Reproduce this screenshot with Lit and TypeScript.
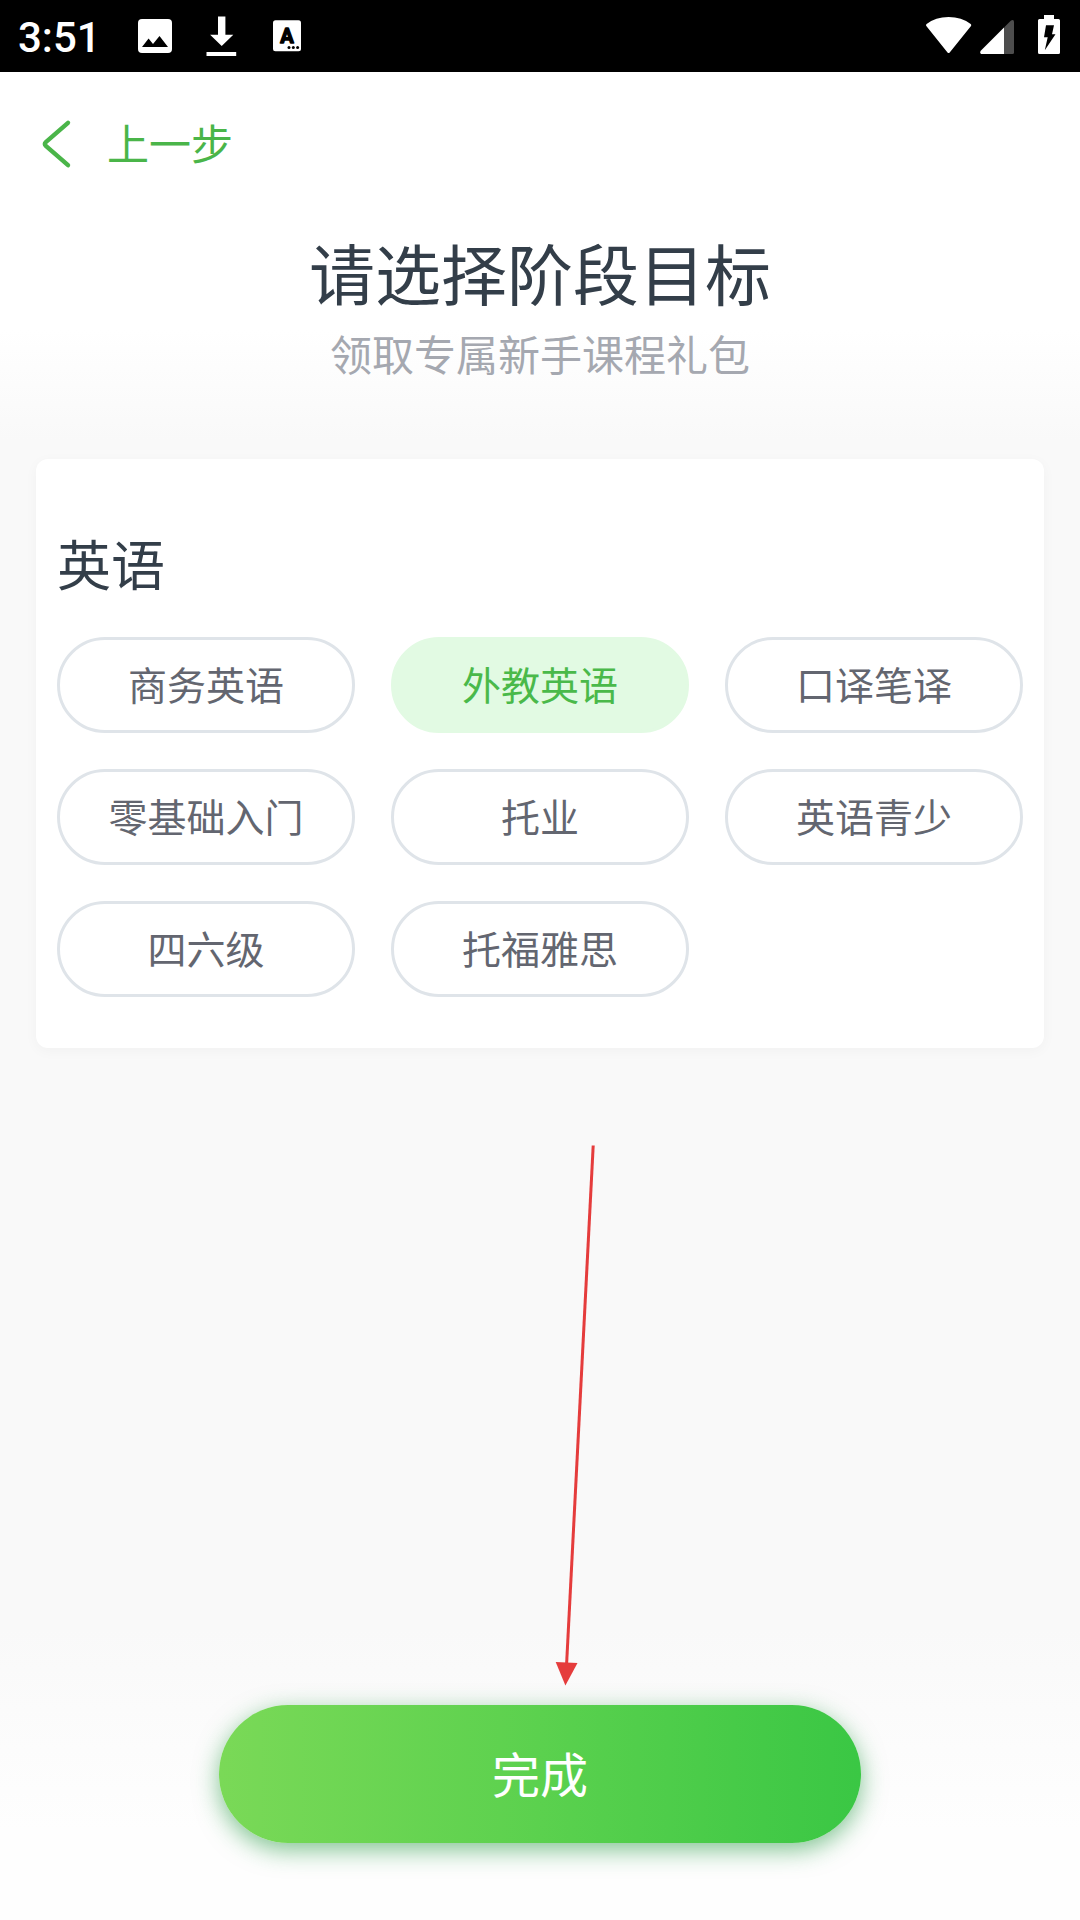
import { LitElement, html, css } from "lit";
import { customElement, property, state } from "lit/decorators.js";
import { classMap } from "lit/directives/class-map.js";

@customElement("status-bar")
class StatusBar extends LitElement {
  static styles = css`
    :host {
      display: flex;
      justify-content: space-between;
      height: 72px;
      box-sizing: border-box;
      padding: 0 20px 0 18px;
      background: #000;
      color: #fff;
    }
    .side {
      display: flex;
      align-items: flex-start;
    }
    .time {
      width: 112px;
      line-height: 76px;
      font-family: Roboto, sans-serif;
      font-weight: 500;
      font-size: 42px;
      white-space: nowrap;
    }
    svg {
      display: block;
    }
    .letter {
      font: 700 20px Roboto, sans-serif;
      stroke: #000;
      stroke-width: 1.4;
      stroke-linejoin: round;
    }
  `;

  render() {
    return html`
      <div class="side">
        <span class="time">3:51</span>
        <svg width="50" height="72" viewBox="130 0 50 72">
          <rect x="138" y="19" width="34" height="34" rx="4" fill="#fff" />
          <path d="M142 47L148.600 38.500L153 44L159.500 36L168 47Z" fill="#000" />
        </svg>
        <svg width="80" height="72" viewBox="180 0 80 72" fill="#fff">
          <path d="M218 16.500H225.400V34.700H233.300L221.700 46L210.100 34.700H218Z" />
          <rect x="206.500" y="52" width="29.700" height="4" />
        </svg>
        <svg width="50" height="72" viewBox="260 0 50 72">
          <rect x="273" y="20.300" width="28" height="31" rx="2.500" fill="#fff" />
          <text class="letter" x="287" y="42.800" text-anchor="middle">A</text>
          <circle cx="289" cy="47.600" r="1.500" />
          <circle cx="293.300" cy="47.600" r="1.500" />
          <circle cx="297.600" cy="47.600" r="1.500" />
        </svg>
      </div>
      <div class="side">
        <svg width="140" height="72" viewBox="920 0 140 72" fill="#fff">
          <path d="M926.300 26Q925.500 24.800 926.600 24Q935.500 17 948.600 17Q961.700 17 970.700 24Q971.800 24.800 971 26L949.700 52.400Q948.600 53.600 947.500 52.400Z" />
          <path d="M1004 27.500V54H981Q979.500 53 980.500 51Z" />
          <path d="M1004 27.500L1011 20.500Q1014 19 1014 22V52.500Q1014 54 1012.500 54H1004Z" fill="#4d4d4d" />
          <path d="M1044 15H1054V19H1058.500Q1060 19 1060 20.500V52.500Q1060 54 1058.500 54H1039.500Q1038 54 1038 52.500V20.500Q1038 19 1039.500 19H1044Z" />
          <path d="M1046 25.300H1054L1052 34.300H1055.500L1044.800 50.300L1047.700 37.300H1044Z" fill="#000" />
        </svg>
      </div>
    `;
  }
}

@customElement("goal-chip")
class GoalChip extends LitElement {
  @property() label = "";
  @property({ type: Boolean }) selected = false;

  static styles = css`
    :host {
      display: block;
    }
    .chip {
      display: flex;
      align-items: center;
      justify-content: center;
      width: 100%;
      height: 96px;
      box-sizing: border-box;
      margin: 0;
      padding: 0 0 5px;
      border: 3px solid #dfe4e9;
      border-radius: 48px;
      background: #fff;
      color: #636670;
      font: 400 39px/60px "Noto Sans CJK SC", sans-serif;
    }
    .selected {
      border-color: #e2fae3;
      background: #e2fae3;
      color: #4ab94a;
    }
  `;

  render() {
    return html`<button class=${classMap({ chip: true, selected: this.selected })}>${this.label}</button>`;
  }
}

@customElement("app-root")
class AppRoot extends LitElement {
  @state() private selected = "外教英语";

  private goals = ["商务英语", "外教英语", "口译笔译", "零基础入门", "托业", "英语青少", "四六级", "托福雅思"];

  static styles = css`
    :host {
      display: flex;
      flex-direction: column;
      position: relative;
      width: 1080px;
      height: 1920px;
      overflow: hidden;
      background: linear-gradient(#fff 330px, #f9f9f9 440px, #f9f9f9 1630px, #fefefe 1830px);
      font-family: "Noto Sans CJK SC", sans-serif;
    }
    .back {
      display: flex;
      align-items: center;
      gap: 32px;
      height: 138px;
      padding-left: 40px;
      color: #4ab549;
      font-size: 42px;
      line-height: 60px;
    }
    .back svg {
      margin-top: 6px;
    }
    .back span {
      margin: 2px 0 0 -1px;
    }
    .title {
      margin: 21px 0 0;
      text-align: center;
      font-weight: 400;
      font-size: 66px;
      line-height: 80px;
      color: #333e49;
    }
    .subtitle {
      margin: 12px 0 0;
      text-align: center;
      font-size: 42px;
      line-height: 60px;
      color: #a5a8b0;
    }
    .card {
      height: 589px;
      box-sizing: border-box;
      margin: 76px 36px 0;
      padding: 69px 21px 0;
      border-radius: 12px;
      background: #fff;
      box-shadow: 0 3px 14px rgba(0, 0, 0, 0.035);
    }
    .group {
      margin: 0 0 39px;
      font-weight: 400;
      font-size: 54px;
      line-height: 70px;
      color: #333e49;
    }
    .goals {
      display: grid;
      grid-template-columns: repeat(3, 1fr);
      gap: 36px;
    }
    .finish {
      align-self: center;
      width: 642px;
      height: 138px;
      margin: auto 0 77px;
      padding: 0 0 4px;
      border: 0;
      border-radius: 69px;
      background: linear-gradient(90deg, #7ad957, #5bd14e 50%, #3ac744);
      box-shadow: 0 7px 24px rgba(30, 150, 60, 0.56);
      color: #fff;
      font: 400 48px/70px "Noto Sans CJK SC", sans-serif;
    }
    .pointer {
      position: absolute;
      left: 550px;
      top: 1140px;
    }
  `;

  render() {
    return html`
      <status-bar></status-bar>
      <nav class="back">
        <svg width="36" height="52" viewBox="40 118 36 52" fill="none" stroke="#4ab549" stroke-width="4.400" stroke-linecap="round" stroke-linejoin="round">
          <path d="M68 122.800L45.800 142.200Q43.800 144 45.800 145.800L68 165.200" />
        </svg>
        <span>上一步</span>
      </nav>
      <h1 class="title">请选择阶段目标</h1>
      <p class="subtitle">领取专属新手课程礼包</p>
      <section class="card">
        <h2 class="group">英语</h2>
        <div class="goals">
          ${this.goals.map(
            (goal) => html`<goal-chip
              .label=${goal}
              .selected=${goal === this.selected}
              @click=${() => (this.selected = goal)}
            ></goal-chip>`
          )}
        </div>
      </section>
      <button class="finish">完成</button>
      <svg class="pointer" width="60" height="550" viewBox="550 1140 60 550">
        <path d="M593.200 1145.500L566.600 1664" stroke="#e53c3c" stroke-width="3" />
        <path d="M555.700 1662L577.500 1663L565.400 1685.500Z" fill="#e53c3c" />
      </svg>
    `;
  }
}
